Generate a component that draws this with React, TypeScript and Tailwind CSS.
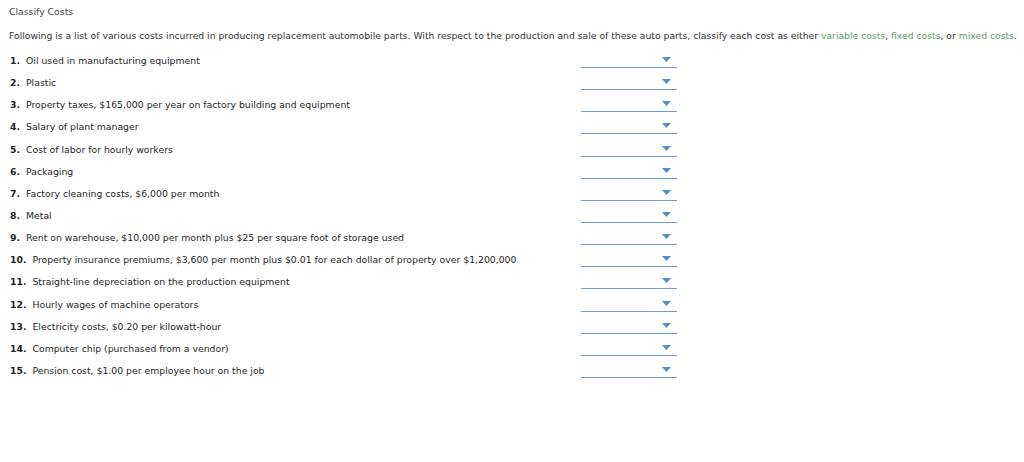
import React from "react";

const items = [
  "Oil used in manufacturing equipment",
  "Plastic",
  "Property taxes, $165,000 per year on factory building and equipment",
  "Salary of plant manager",
  "Cost of labor for hourly workers",
  "Packaging",
  "Factory cleaning costs, $6,000 per month",
  "Metal",
  "Rent on warehouse, $10,000 per month plus $25 per square foot of storage used",
  "Property insurance premiums, $3,600 per month plus $0.01 for each dollar of property over $1,200,000",
  "Straight-line depreciation on the production equipment",
  "Hourly wages of machine operators",
  "Electricity costs, $0.20 per kilowatt-hour",
  "Computer chip (purchased from a vendor)",
  "Pension cost, $1.00 per employee hour on the job",
];

const Dropdown = () => (
  <div className="w-[96px] h-[14px] border-b border-[#6a9fd0] flex items-end justify-end pr-[6px] pb-[5px]">
    <svg width="9" height="5" viewBox="0 0 9 5">
      <polygon points="0,0 9,0 4.5,5" fill="#4f8fc9" />
    </svg>
  </div>
);

export default function App() {
  return (
    <div
      className="w-[1024px] h-[462px] bg-white text-[#333] text-[9.3px] pt-[6px] pl-[9px]"
      style={{ fontFamily: '"DejaVu Sans", Verdana, sans-serif' }}
    >
      <div className="leading-[12px] text-[#444]">Classify Costs</div>
      <div className="leading-[12px] mt-[12px] whitespace-nowrap text-[9.24px]">
        Following is a list of various costs incurred in producing replacement automobile parts. With respect to the
        production and sale of these auto parts, classify each cost as either{" "}
        <span className="text-[#5fa05f]">variable costs</span>,{" "}
        <span className="text-[#5fa05f]">fixed costs</span>, or{" "}
        <span className="text-[#5fa05f]">mixed costs</span>.
      </div>
      <div className="mt-[8px] flex flex-col">
        {items.map((t, i) => (
          <div key={i} className="h-[22.15px] flex items-center">
            <div className="w-[572px] pl-[1px] leading-[12px] whitespace-nowrap text-[#1f1f1f]">
              <span className="font-bold mr-[3px]">{i + 1}.</span> {t}
            </div>
            <Dropdown />
          </div>
        ))}
      </div>
    </div>
  );
}
